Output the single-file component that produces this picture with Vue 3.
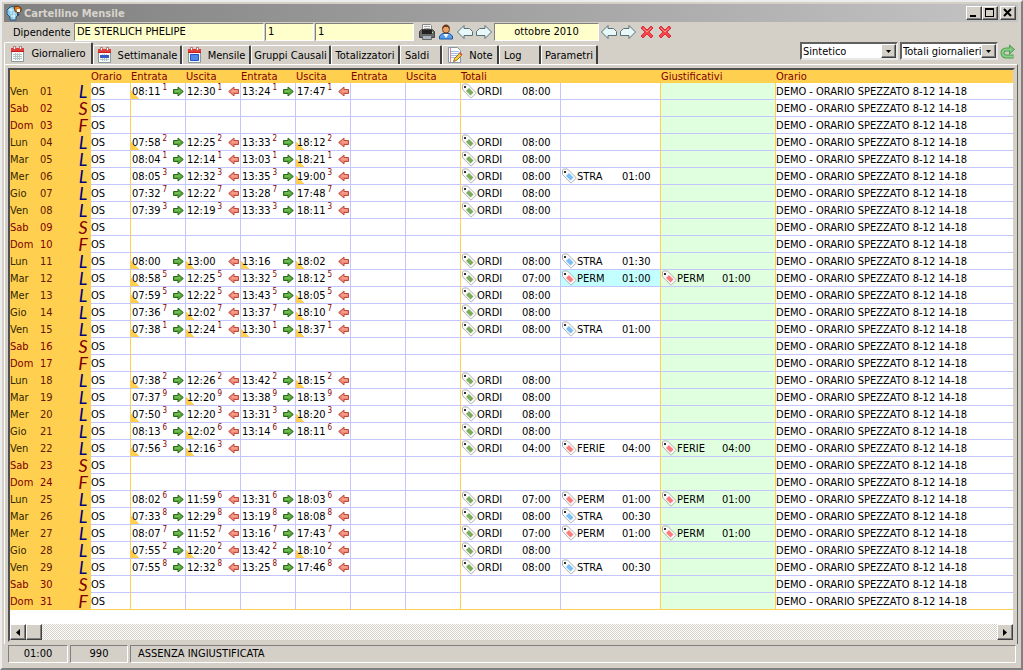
<template>
  <div class="window">
    <!-- Barra del titolo -->
    <header class="title-bar">
      <svg class="app-icon" width="16" height="16" viewBox="0 0 16 16">
        <path d="M1 5 L4 2 L9 1 L12 3 L12 10 L10 12 L10 15 L4 15 L4 12 L1 9Z" fill="#8cc8e8" stroke="#245c80" />
        <path d="M3 5h6M5 3v6M8 7v7M5 11h4" stroke="#e8f8ff" />
        <path d="M8 2 L12 1 L15 3 L15 6 L12 8 L9 6Z" fill="#e88020" stroke="#603010" />
        <path d="M11 4h3v3h-3z" fill="#fff" />
        <path d="M11 8 L14 10 L11 11" fill="#304050" />
      </svg>
      <h1>Cartellino Mensile</h1>
      <div class="window-buttons">
        <button type="button" class="btn3d" aria-label="Riduci">
          <svg width="12" height="10"><path d="M2 7h6v2h-6z" /></svg>
        </button>
        <button type="button" class="btn3d" aria-label="Ingrandisci">
          <svg width="12" height="10"><path d="M1 0h9v9h-9zM2 2v6h7v-6z" fill-rule="evenodd" /></svg>
        </button>
        <button type="button" class="btn3d close" aria-label="Chiudi">
          <svg width="12" height="10"><path d="M2 1l7 7M9 1l-7 7" stroke="#000" stroke-width="2" /></svg>
        </button>
      </div>
    </header>

    <!-- Barra degli strumenti -->
    <div class="toolbar">
      <label for="dipendente">Dipendente</label>
      <input id="dipendente" v-model="dipendente" class="field name" type="text" />
      <input v-model="azienda" class="field company" type="text" aria-label="Azienda" />
      <input v-model="matricola" class="field number" type="text" aria-label="Matricola" />
      <div class="tools">
        <button type="button" class="tool" aria-label="Stampa">
          <svg width="16" height="16" viewBox="0 0 16 16">
            <path d="M3.500 0.500h8l1 1v6h-9z" fill="#f4f4f4" stroke="#888" />
            <path d="M5 2.500h6M5 4.500h6" stroke="#aaa" />
            <path d="M0.500 7.500l2-2h11l2 2v6h-15z" fill="#6c6c6c" stroke="#444" />
            <path d="M3 6h10v4h-10z" fill="#222" />
            <path d="M3.500 11.500h9v4h-9z" fill="#a8b4c0" stroke="#666" />
            <path d="M13 8h1v1h-1z" fill="#9f9" />
          </svg>
        </button>
        <button type="button" class="tool" aria-label="Anagrafica">
          <svg width="16" height="16" viewBox="0 0 16 16">
            <path d="M1.500 15v-3l3-2.500h7l3 2.500v3z" fill="#5a9ee8" stroke="#1c57a0" />
            <path d="M5.500 10l2.500 4 2.500-4z" fill="#fff" />
            <circle cx="8" cy="5.500" r="3.500" fill="#e8a468" stroke="#7a4018" />
            <path d="M4 5c0-6 8-6 8 0l-2-2h-4z" fill="#6a3818" />
          </svg>
        </button>
      </div>
      <div class="arrows">
        <button type="button" class="tool" aria-label="Dipendente precedente">
          <svg class="nav" width="16" height="16" viewBox="0 0 16 16"><path :d="navLeft" /></svg>
        </button>
        <button type="button" class="tool" aria-label="Dipendente successivo">
          <svg class="nav" width="16" height="16" viewBox="0 0 16 16"><path :d="navRight" /></svg>
        </button>
      </div>
      <input v-model="mese" class="field month" type="text" aria-label="Mese" />
      <div class="arrows">
        <button type="button" class="tool" aria-label="Mese precedente">
          <svg class="nav" width="16" height="16" viewBox="0 0 16 16"><path :d="navLeft" /></svg>
        </button>
        <button type="button" class="tool" aria-label="Mese successivo">
          <svg class="nav" width="16" height="16" viewBox="0 0 16 16"><path :d="navRight" /></svg>
        </button>
      </div>
      <div class="deletes">
        <button v-for="n in 2" :key="n" type="button" class="tool" aria-label="Elimina">
          <svg width="14" height="14" viewBox="0 0 14 14">
            <path d="M1 3l2-2 4 4 4-4 2 2-4 4 4 4-2 2-4-4-4 4-2-2 4-4z" fill="#f24a4a" stroke="#d82c38" stroke-linejoin="round" />
            <path d="M3 3l4 4 4-4" fill="none" stroke="#ff8c80" />
          </svg>
        </button>
      </div>
    </div>

    <!-- Schede e filtri -->
    <div class="tab-row">
      <nav class="tabs" role="tablist">
        <button
          v-for="tab in tabs"
          :key="tab.label"
          type="button"
          role="tab"
          :class="['tab', tab.size, { active: tab.label === activeTab }]"
          :aria-selected="tab.label === activeTab"
          @click="activeTab = tab.label"
        >
          <svg v-if="tab.icon === 'cal'" width="15" height="16" viewBox="0 0 15 16">
            <path d="M1.500 3.500h12v12h-12z" fill="#f6fafa" stroke="#8a9a9a" />
            <path d="M1 2h13v4h-13z" fill="#e83a34" />
            <path d="M1 5h13v1h-13z" fill="#c02020" />
            <path d="M3.500 0.500h2v3h-2zM9.500 0.500h2v3h-2z" fill="#fff" stroke="#a03030" stroke-width="0.6" />
            <path d="M3 8.500h9M3 10.500h9M3 12.500h9M5.500 7v7M7.500 7v7M9.500 7v7" stroke="#b4c8c0" />
            <path v-if="tab.fill === 'week'" d="M3 8h9v3h-9z" fill="#3858c8" />
            <path v-if="tab.fill === 'month'" d="M3.500 7.500h8v6h-8z" fill="#5088e8" stroke="#2850c0" />
          </svg>
          <svg v-if="tab.icon === 'note'" width="16" height="16" viewBox="0 0 16 16">
            <path d="M1.500 0.500h9l3 3v12h-12z" fill="#fcfeff" stroke="#8898a8" />
            <path d="M4 4.500h8M4 6.500h8M4 8.500h8M4 10.500h5" stroke="#9cbce0" />
            <path d="M3.500 1v14" stroke="#e88080" />
            <path d="M6.500 14.500l1-3 5-5 2 2-5 5z" fill="#f8c840" stroke="#a07010" />
            <path d="M12 6l1-1 2.500 2.500-1 1z" fill="#e05040" />
          </svg>
          <span>{{ tab.label }}</span>
        </button>
      </nav>
      <div class="filters">
        <div v-for="f in filters" :key="f.id" class="select-box">
          <select :id="f.id" v-model="f.value" :aria-label="f.title">
            <option v-for="o in f.options" :key="o">{{ o }}</option>
          </select>
          <span class="drop btn3d">
            <svg width="5" height="3"><path d="M0 0h5l-2.500 3z" /></svg>
          </span>
        </div>
        <button type="button" class="tool refresh" aria-label="Aggiorna">
          <svg width="16" height="16" viewBox="0 0 16 16">
            <path d="M13.500 12.500H6a3.500 3.500 0 0 1 0-7h5" fill="none" stroke="#4c9c50" stroke-width="4" />
            <path d="M9.500 1l5 4.500-5 4.500z" fill="#7cc47c" stroke="#4c9c50" />
            <path d="M13 12.500H6a3.500 3.500 0 0 1 0-7h5" fill="none" stroke="#8cd08c" stroke-width="2" />
          </svg>
        </button>
      </div>
    </div>

    <!-- Griglia delle giornate -->
    <main class="page">
      <div class="grid">
        <table>
          <colgroup>
            <col class="c-name" />
            <col class="c-num" />
            <col class="c-type" />
            <col class="c-code" />
            <col v-for="n in 6" :key="n" class="c-swipe" />
            <col class="c-total" />
            <col class="c-total" />
            <col class="c-just" />
            <col />
          </colgroup>
          <thead>
            <tr>
              <th colspan="3"></th>
              <th>Orario</th>
              <th v-for="n in 6" :key="n">{{ n % 2 ? 'Entrata' : 'Uscita' }}</th>
              <th colspan="2">Totali</th>
              <th>Giustificativi</th>
              <th>Orario</th>
            </tr>
          </thead>
          <tbody>
            <tr v-for="day in days" :key="day.num" :class="{ holiday: day.type !== 'L' }">
              <td class="day">{{ day.name }}</td>
              <td class="day num">{{ day.num }}</td>
              <td class="day type"><span>{{ day.type }}</span></td>
              <td class="gold">OS</td>
              <td v-for="n in 6" :key="n" :class="{ gold: n === 6, late: day.swipes[n - 1]?.mark }">
                <div v-if="day.swipes[n - 1]" class="swipe">
                  <span>{{ day.swipes[n - 1].time }}</span>
                  <small>{{ day.swipes[n - 1].reader }}</small>
                  <svg v-if="n % 2" width="11" height="11" viewBox="0 0 11 11">
                    <path d="M0.500 3.500H5V1L10.300 5.500L5 10V7.500H0.500Z" fill="#58a83c" stroke="#286818" />
                    <path d="M2 5h5" stroke="#90cc70" />
                  </svg>
                  <svg v-else width="11" height="11" viewBox="0 0 11 11">
                    <path d="M10.500 3.500H6V1L0.700 5.500L6 10V7.500H10.500Z" fill="#f08878" stroke="#c04838" />
                    <path d="M4 5h5" stroke="#f8b0a0" />
                  </svg>
                </div>
              </td>
              <td
                v-for="n in 3"
                :key="'t' + n"
                :class="{ gold: n > 1, just: n === 3, alert: n === 2 && day.alert }"
              >
                <div v-if="day.items[n - 1]" class="item">
                  <svg width="16" height="16" viewBox="0 0 16 16">
                    <path d="M1.500 2L2.500 1H6.500L14.800 9.300V10.500L10.500 14.800H9.500L1.500 6.500Z" fill="#fafafa" stroke="#b0b0b0" />
                    <path d="M8 5L12.500 9.500L9.500 12.500L5 8Z" :fill="day.items[n - 1].color" />
                    <path d="M3 3h2v2h-2z" fill="#333" />
                  </svg>
                  <span>{{ day.items[n - 1].code }}</span>
                  <span>{{ day.items[n - 1].hours }}</span>
                </div>
              </td>
              <td class="desc">DEMO - ORARIO SPEZZATO 8-12 14-18</td>
            </tr>
          </tbody>
        </table>
        <div class="scrollbar">
          <button type="button" class="btn3d" aria-label="Scorri a sinistra">
            <svg width="4" height="7"><path d="M4 0v7l-4-3.500z" /></svg>
          </button>
          <span class="thumb btn3d"></span>
          <button type="button" class="btn3d last" aria-label="Scorri a destra">
            <svg width="4" height="7"><path d="M0 0v7l4-3.500z" /></svg>
          </button>
        </div>
      </div>
    </main>

    <!-- Barra di stato -->
    <footer class="status">
      <span class="cell hours">01:00</span>
      <span class="cell code">990</span>
      <span class="cell text">ASSENZA INGIUSTIFICATA</span>
    </footer>
  </div>
</template>

<script setup>
import { ref } from 'vue'

const dipendente = ref('DE STERLICH PHELIPE')
const azienda = ref('1')
const matricola = ref('1')
const mese = ref('ottobre 2010')
const activeTab = ref('Giornaliero')

const navLeft = 'M0.500 8L7 1.500V4.500H12.500L15.500 7.500V11.500H7V14.500Z'
const navRight = 'M15.500 8L9 1.500V4.500H3.500L0.500 7.500V11.500H9V14.500Z'

const tabs = [
  { label: 'Giornaliero', icon: 'cal', size: 'w88' },
  { label: 'Settimanale', icon: 'cal', fill: 'week', size: 'w88' },
  { label: 'Mensile', icon: 'cal', fill: 'month', size: 'w69' },
  { label: 'Gruppi Causali', size: 'w80' },
  { label: 'Totalizzatori', size: 'w69' },
  { label: 'Saldi', size: 'w42' },
  { label: 'Note', icon: 'note', size: 'w57' },
  { label: 'Log', size: 'w42' },
  { label: 'Parametri', size: 'w57' }
]

const filters = ref([
  { id: 'vista', title: 'Vista', value: 'Sintetico', options: ['Sintetico', 'Analitico'] },
  { id: 'totali', title: 'Totali', value: 'Totali giornalieri', options: ['Totali giornalieri', 'Totali mensili'] }
])

// Timbrature: ora, lettore dopo "/" e asterisco se arrotondata
const timbrature = {
  1: '08:11/1* 12:30/1 13:24/1 17:47/1',
  4: '07:58/2* 12:25/2 13:33/2 18:12/2*',
  5: '08:04/1 12:14/1 13:03/1 18:21/1*',
  6: '08:05/3 12:32/3 13:35/3 19:00/3*',
  7: '07:32/7 12:22/7 13:28/7 17:48/7',
  8: '07:39/3 12:19/3 13:33/3 18:11/3',
  11: '08:00/* 13:00/* 13:16/* 18:02/*',
  12: '08:58/5* 12:25/5 13:32/5 18:12/5',
  13: '07:59/5* 12:22/5 13:43/5 18:05/5*',
  14: '07:36/7 12:02/7* 13:37/7 18:10/7*',
  15: '07:38/1* 12:24/1* 13:30/1* 18:37/1*',
  18: '07:38/2* 12:26/2 13:42/2 18:15/2*',
  19: '07:37/9 12:20/9* 13:38/9 18:13/9',
  20: '07:50/3* 12:20/3 13:31/3 18:20/3*',
  21: '08:13/6 12:02/6* 13:14/6 18:11/6',
  22: '07:56/3* 12:16/3*',
  25: '08:02/6 11:59/6 13:31/6 18:03/6',
  26: '07:33/8* 12:29/8 13:19/8 18:08/8',
  27: '08:07/7 11:52/7 13:16/7 17:43/7',
  28: '07:55/2* 12:20/2* 13:42/2 18:10/2*',
  29: '07:55/8 12:32/8 13:25/8 17:46/8'
}

// Ore ordinarie diverse dalle 8 standard
const ordinarie = { 12: '07:00', 22: '04:00', 25: '07:00', 27: '07:00' }

const extra = {
  6: ['STRA', '01:00'],
  11: ['STRA', '01:30'],
  12: ['PERM', '01:00'],
  15: ['STRA', '01:00'],
  22: ['FERIE', '04:00'],
  25: ['PERM', '01:00'],
  26: ['STRA', '00:30'],
  27: ['PERM', '01:00'],
  29: ['STRA', '00:30']
}

const colors = { ORDI: '#7cac5c', STRA: '#78c0f8', PERM: '#ff7c7c', FERIE: '#ff7c7c' }
const names = ['Gio', 'Ven', 'Sab', 'Dom', 'Lun', 'Mar', 'Mer']

const makeItem = (code, hours) => ({ code, hours, color: colors[code] })

const days = Array.from({ length: 31 }, (_, i) => {
  const d = i + 1
  const name = names[d % 7]
  const swipes = (timbrature[d] || '').split(' ').filter(Boolean).map((s) => {
    const [time, rest] = s.split('/')
    return { time, reader: rest.replace('*', ''), mark: rest.includes('*') }
  })
  const items = []
  if (swipes.length) items[0] = makeItem('ORDI', ordinarie[d] || '08:00')
  if (extra[d]) {
    items[1] = makeItem(...extra[d])
    if (extra[d][0] !== 'STRA') items[2] = items[1]
  }
  return {
    num: String(d).padStart(2, '0'),
    name,
    type: name === 'Sab' ? 'S' : name === 'Dom' ? 'F' : 'L',
    swipes,
    items,
    alert: d === 12
  }
})
</script>

<style>
body {
  margin: 0;
  background: #d4d0c8;
}
</style>

<style scoped>
.window {
  box-sizing: border-box;
  min-height: 100vh;
  display: flex;
  flex-direction: column;
  padding: 2px 3px 1px 2px;
  border: 2px solid #ececec;
  border-right-color: #808080;
  border-bottom-color: #808080;
  background: #d4d0c8;
  color: #000;
  font-family: "DejaVu Sans Condensed", "DejaVu Sans", Tahoma, sans-serif;
  font-size: 11px;
  line-height: 13px;
}

button,
input,
select {
  box-sizing: border-box;
  margin: 0;
  border: 0;
  border-radius: 0;
  font: inherit;
  color: inherit;
}

button {
  display: flex;
  align-items: center;
  justify-content: center;
  padding: 0;
  background: #d4d0c8;
}

svg {
  display: block;
  flex: none;
}

/* Rilievo dei pulsanti */
.btn3d {
  box-sizing: border-box;
  width: 16px;
  background: #d4d0c8;
  border: 1px solid;
  border-color: #fff #404040 #404040 #fff;
  box-shadow: inset -1px -1px #808080;
}

/* Barra del titolo */
.title-bar {
  display: flex;
  align-items: center;
  height: 18px;
  padding: 0 2px;
  gap: 2px;
  background: linear-gradient(90deg, #808080, #c4c4c4);
}

h1 {
  flex: 1;
  margin: 0;
  color: #d8d4cc;
  font-size: 11px;
  font-weight: bold;
}

.window-buttons {
  display: flex;
}

.window-buttons .btn3d {
  height: 14px;
}

.window-buttons .close {
  margin-left: 2px;
}

/* Barra degli strumenti */
.toolbar {
  display: flex;
  align-items: center;
  height: 20px;
  padding-left: 9px;
}

.toolbar label {
  width: 61px;
}

.field {
  height: 18px;
  margin-right: 1px;
  padding: 0 2px 1px;
  background: #ffffcc;
  border: 1px solid;
  border-color: #808080 #fff #fff #808080;
}

.name {
  width: 190px;
}

.company {
  width: 49px;
}

.number {
  width: 99px;
}

.month {
  width: 105px;
  text-align: center;
}

.tool {
  background: none;
}

.tools,
.arrows {
  display: flex;
  gap: 3px;
  padding: 0 2px;
}

.arrows {
  padding-left: 1px;
}

.tools {
  padding-left: 4px;
}

.deletes {
  display: flex;
  gap: 4px;
  padding-left: 2px;
}

.nav path {
  fill: #e8f8f8;
  stroke: #587078;
  stroke-linejoin: round;
}

/* Schede */
.tab-row {
  display: flex;
  justify-content: space-between;
  height: 22px;
}

.tabs {
  display: flex;
  align-items: flex-end;
}

.tab {
  height: 19px;
  gap: 6px;
  border-top: 1px solid #fff;
  border-left: 1px solid #fff;
  border-right: 2px solid #404040;
  border-radius: 2px 2px 0 0;
  white-space: nowrap;
}

.tab.active {
  height: 22px;
}

.w88 {
  width: 89px;
}

.w80 {
  width: 80px;
}

.w69 {
  width: 69px;
}

.w57 {
  width: 57px;
}

.w42 {
  width: 42px;
  justify-content: flex-start;
  padding-left: 4px;
}

.filters {
  display: flex;
  align-items: flex-start;
  gap: 2px;
  padding-right: 2px;
}

.refresh {
  padding-top: 2px;
}

.select-box {
  position: relative;
}

select {
  display: block;
  width: 98px;
  height: 18px;
  padding: 0 14px 0 1px;
  background: #fff;
  border: 2px solid;
  border-color: #606060 #e8e8e8 #e8e8e8 #606060;
  appearance: none;
}

.drop {
  position: absolute;
  top: 2px;
  right: 2px;
  width: 15px;
  height: 14px;
  display: flex;
  align-items: center;
  justify-content: center;
  pointer-events: none;
}

/* Griglia */
.page {
  flex: 1;
  display: flex;
  padding: 3px 2px 2px 3px;
  border-top: 1px solid #fff;
  border-left: 1px solid #fff;
  border-right: 1px solid #606060;
}

.grid {
  flex: 1;
  display: flex;
  flex-direction: column;
  background: #fff;
  border: 2px solid;
  border-color: #505050 #d4d0c8 #d4d0c8 #505050;
}

table {
  width: 100%;
  table-layout: fixed;
  border-collapse: separate;
  border-spacing: 0;
}

.c-name {
  width: 29px;
}

.c-num {
  width: 36px;
}

.c-type {
  width: 16px;
}

.c-code {
  width: 40px;
}

.c-swipe {
  width: 55px;
}

.c-total {
  width: 100px;
}

.c-just {
  width: 115px;
}

th {
  height: 13px;
  padding: 0;
  background: #ffcf50;
  color: #800000;
  font-weight: normal;
  text-align: left;
}

td {
  box-sizing: border-box;
  height: 17px;
  padding: 0;
  border-right: 1px solid #c4c4ff;
  border-bottom: 1px solid #c4c4ff;
  white-space: nowrap;
}

td.day {
  background: #ffcf50;
  border-color: #ffcf50;
  color: #302800;
}

td.num {
  padding-left: 1px;
  color: #601800;
}

.holiday td.day {
  color: #800000;
}

td.type {
  border: 0;
}

/* Sigla del tipo di giornata */
.type span {
  display: block;
  height: 17px;
  color: #000080;
  font-family: Lato, sans-serif;
  font-size: 18px;
  font-style: italic;
  line-height: 17px;
  text-align: center;
}

.holiday .type span {
  color: #800000;
}

td.gold {
  border-right-color: #ffcf50;
}

td.just {
  background: #dfffdf;
}

td.alert {
  background: #c4ffff;
}

td.late {
  background: linear-gradient(45deg, #ffcf50 6px, transparent 6px);
}

td.desc {
  border-right: 0;
}

tbody tr:last-child td {
  border-bottom-color: #ffcf50;
}

.swipe {
  display: flex;
  align-items: center;
  height: 16px;
  padding: 0 1px;
}

.swipe small {
  flex: 1;
  height: 16px;
  padding-left: 2px;
  color: #800000;
  font-size: 8px;
  line-height: 10px;
}

.item {
  display: grid;
  grid-template-columns: 16px 45px auto;
  align-items: center;
  height: 16px;
}

/* Barra di scorrimento */
.scrollbar {
  display: flex;
  height: 16px;
  margin-top: auto;
  background: repeating-conic-gradient(#fff 0 25%, #d4d0c8 0 50%) 0 0 / 2px 2px;
}

.scrollbar .last {
  margin-left: auto;
}

/* Barra di stato */
.status {
  display: flex;
  gap: 2px;
  padding: 1px 2px 4px 4px;
}

.cell {
  box-sizing: border-box;
  height: 18px;
  border: 1px solid;
  border-color: #808080 #fff #fff #808080;
  line-height: 16px;
  text-align: center;
}

.hours {
  width: 60px;
}

.code {
  width: 58px;
}

.text {
  flex: 1;
  padding-left: 7px;
  text-align: left;
}
</style>
